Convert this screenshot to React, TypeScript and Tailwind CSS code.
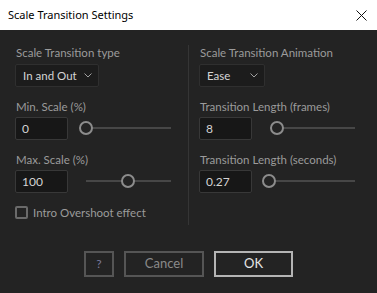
import React from 'react';

const font = { fontFamily: 'Lato, "Noto Sans", sans-serif' };

const Label: React.FC<{ text: string; className?: string }> = ({ text, className = '' }) => (
  <div className={`h-4 text-[11.5px] leading-4 text-[#9b9b9b] ${className}`}>{text}</div>
);

const Dropdown: React.FC<{ value: string; width: string }> = ({ value, width }) => (
  <div
    className={`mt-[3px] flex h-[23px] ${width} items-center justify-between rounded-[2px] border border-[#2f2f2f] bg-[#1c1c1c] pl-[7px] pr-[6px] text-[11.5px] text-[#d4d4d4]`}
  >
    <span>{value}</span>
    <svg width="8" height="5" viewBox="0 0 8 5" fill="none">
      <path d="M0.5 0.5 L4 4 L7.5 0.5" stroke="#a0a0a0" strokeWidth="1" />
    </svg>
  </div>
);

const Slider: React.FC<{ knob: number }> = ({ knob }) => (
  <div className="relative ml-[18px] h-[23px] w-[85px]">
    <div className="absolute left-0 right-0 top-[10px] h-[2px] bg-[#474747]" />
    <div
      className="absolute top-[4px] h-[14px] w-[14px] -translate-x-1/2 rounded-full border-2 border-[#8c8c8c] bg-[#232323]"
      style={{ left: knob }}
    />
  </div>
);

const Field: React.FC<{ value: string; knob: number }> = ({ value, knob }) => (
  <div className="mt-[2px] flex items-center">
    <div className="flex h-[23px] w-[53px] items-center rounded-[2px] border border-[#383838] bg-[#171717] pl-[6px] text-[12px] text-[#d4d4d4]">
      {value}
    </div>
    <Slider knob={knob} />
  </div>
);

export default function App() {
  return (
    <div className="flex h-[293px] w-[377px] flex-col bg-[#232323]" style={font}>
      <div className="flex h-[30px] items-center justify-between bg-white pl-2 pr-[10px]">
        <span className="text-[11px] text-black" style={{ fontFamily: '"Noto Sans", sans-serif' }}>
          Scale Transition Settings
        </span>
        <svg width="11" height="11" viewBox="0 0 11 11">
          <path d="M0.5 0.5 L10.5 10.5 M10.5 0.5 L0.5 10.5" stroke="#111" strokeWidth="1" />
        </svg>
      </div>

      <div className="flex pl-[15px] pt-[15px]">
        <div className="w-[173px]">
          <Label text="Scale Transition type" className="pl-px" />
          <Dropdown value="In and Out" width="w-[84px]" />
          <Label text="Min. Scale (%)" className="mt-3 pl-px" />
          <Field value="0" knob={0} />
          <Label text="Max. Scale (%)" className="mt-3 pl-px" />
          <Field value="100" knob={42} />
          <label className="mt-[11px] flex items-center gap-[5px] text-[11.5px] text-[#9b9b9b]">
            <span className="h-[13px] w-[13px] rounded-[2px] border-2 border-[#6a6a6a]" />
            Intro Overshoot effect
          </label>
        </div>

        <div className="h-[180px] w-px bg-[#353535]" />

        <div className="pl-[10px]">
          <Label text="Scale Transition Animation" className="pl-px" />
          <Dropdown value="Ease" width="w-[66px]" />
          <Label text="Transition Length (frames)" className="mt-3 pl-px" />
          <Field value="8" knob={7} />
          <Label text="Transition Length (seconds)" className="mt-3 pl-px" />
          <Field value="0.27" knob={-1} />
        </div>
      </div>

      <div className="mt-auto mb-4 flex justify-center gap-[10px]">
        <button className="h-[26px] w-[30px] border-2 border-[#555] text-[12px] text-[#7a7a9a]">?</button>
        <button className="h-[26px] w-[80px] border-2 border-[#555] text-[13px] text-[#8a8a8a]">Cancel</button>
        <button className="h-[26px] w-[79px] border-2 border-[#b4b4b4] text-[13px] text-[#e6e6e6]">OK</button>
      </div>
    </div>
  );
}
